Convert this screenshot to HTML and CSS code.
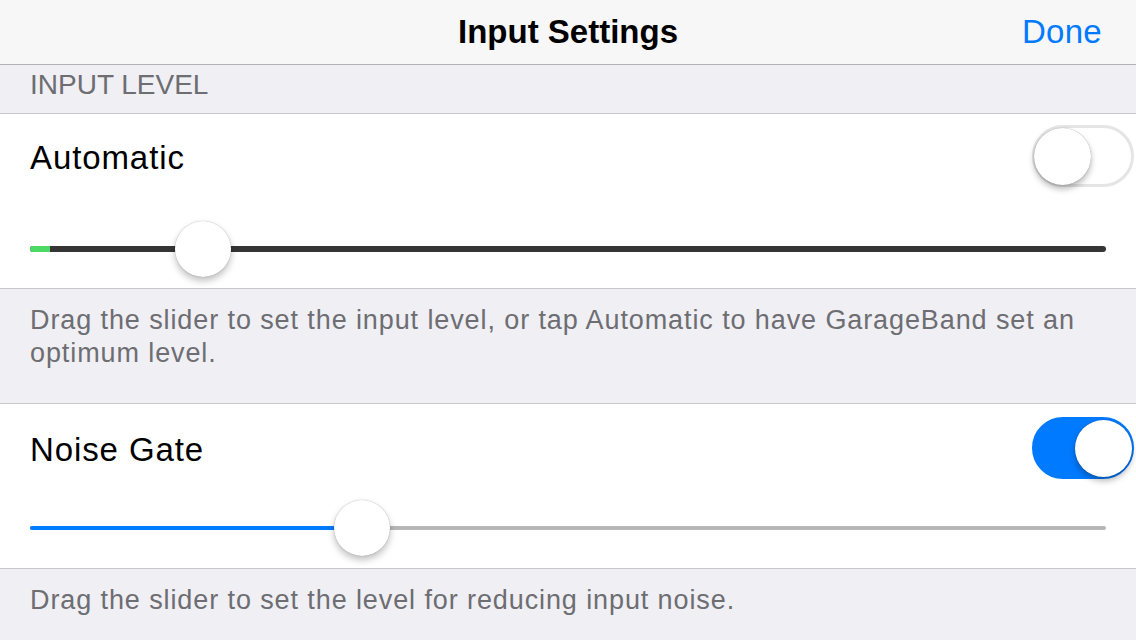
FILE: index.html
```html
<!DOCTYPE html>
<html lang="en">
<head>
    <meta charset="UTF-8">
    <meta name="viewport" content="width=device-width, initial-scale=1.0">
    <title>Input Settings</title>
    <link rel="stylesheet" href="styles.css">
</head>
<body>
    <header class="navbar">
        <span></span>
        <h1 class="nav-title">Input Settings</h1>
        <a class="nav-done" href="#">Done</a>
    </header>

    <div class="section-header">INPUT LEVEL</div>

    <section class="cell cell-level">
        <div class="cell-row">
            <span class="cell-label">Automatic</span>
            <div class="switch"><div class="knob"></div></div>
        </div>
        <div class="slider slider-level">
            <div class="track">
                <div class="meter"></div>
                <div class="thumb" style="left: 16.1%;"></div>
            </div>
        </div>
    </section>

    <p class="section-footer">Drag the slider to set the input level, or tap Automatic to have GarageBand set an optimum level.</p>

    <section class="cell cell-gate">
        <div class="cell-row">
            <span class="cell-label">Noise Gate</span>
            <div class="switch on"><div class="knob"></div></div>
        </div>
        <div class="slider slider-gate">
            <div class="track">
                <div class="fill" style="width: 30.9%;"></div>
                <div class="thumb" style="left: 30.9%;"></div>
            </div>
        </div>
    </section>

    <p class="section-footer">Drag the slider to set the level for reducing input noise.</p>
</body>
</html>
```

FILE: styles.css
```css
:root {
    --color-blue: #007aff;
    --color-green: #4cd964;
    --color-group: #efeff4;
    --color-separator: #c8c7cc;
    --color-muted: #6d6d72;
    --side: 30px;
}
html, body {
    margin: 0;
    padding: 0;
}
body {
    width: 1136px;
    height: 640px;
    overflow: hidden;
    font-family: 'Liberation Sans', Arial, sans-serif;
    background-color: var(--color-group);
    color: #000;
}

/* navigation bar */
.navbar {
    height: 64px;
    display: grid;
    grid-template-columns: 1fr auto 1fr;
    align-items: center;
    background-color: #f7f7f7;
    border-bottom: 1px solid #b2b2b2;
    padding: 0 34px;
}
.nav-title {
    margin: 0;
    font-size: 33px;
    font-weight: bold;
}
.nav-done {
    justify-self: end;
    font-size: 33px;
    color: var(--color-blue);
    text-decoration: none;
    letter-spacing: 0.3px;
}

/* grouped table */
.section-header {
    box-sizing: border-box;
    height: 48px;
    padding: 6px var(--side) 0;
    font-size: 28px;
    line-height: 28px;
    color: var(--color-muted);
}
.section-footer {
    margin: 0;
    padding: 15px var(--side) 0;
    font-size: 27px;
    line-height: 33px;
    letter-spacing: 0.9px;
    color: var(--color-muted);
}
.section-footer:nth-of-type(1) {
    height: 99px;
}
.cell {
    background-color: #fff;
    border-top: 1px solid var(--color-separator);
    border-bottom: 1px solid var(--color-separator);
    padding-left: var(--side);
}
.cell-level {
    padding-top: 11px;
    padding-bottom: 11px;
}
.cell-gate {
    padding-top: 13px;
    padding-bottom: 12px;
}
.cell-row {
    display: flex;
    align-items: center;
    justify-content: space-between;
    padding-right: 2px;
}
.cell-label {
    padding-top: 3px;
    font-size: 33px;
    letter-spacing: 0.9px;
}

/* switch */
.switch {
    box-sizing: border-box;
    width: 102px;
    height: 62px;
    border-radius: 31px;
    border: 3px solid #e5e5e5;
    background-color: #fff;
    display: flex;
    align-items: center;
}
.switch .knob {
    width: 57px;
    height: 57px;
    margin-left: -1px;
    border-radius: 50%;
    background-color: #fff;
    box-shadow: 0 4px 6px rgba(0,0,0,0.28), 0 0 1px rgba(0,0,0,0.4);
}
.switch.on {
    border-color: var(--color-blue);
    background-color: var(--color-blue);
    justify-content: flex-end;
}
.switch.on .knob {
    margin-left: 0;
    margin-right: -1px;
}

/* sliders */
.slider {
    height: 56px;
    display: flex;
    align-items: center;
    padding-right: var(--side);
}
.slider-level {
    margin-top: 34px;
}
.slider-gate {
    margin-top: 21px;
}
.track {
    position: relative;
    flex: 1;
    border-radius: 3px;
}
.slider-level .track {
    height: 6px;
    background-color: #353535;
}
.slider-gate .track {
    height: 4px;
    background-color: #b6b6b6;
}
.meter {
    width: 20px;
    height: 100%;
    border-radius: 3px 0 0 3px;
    background-color: var(--color-green);
}
.fill {
    height: 100%;
    border-radius: 2px 0 0 2px;
    background-color: var(--color-blue);
}
.thumb {
    position: absolute;
    top: 50%;
    width: 56px;
    height: 56px;
    margin: -28px 0 0 -28px;
    border-radius: 50%;
    background-color: #fff;
    box-shadow: 0 4px 7px rgba(0,0,0,0.25), 0 0 1px rgba(0,0,0,0.35);
}
```
